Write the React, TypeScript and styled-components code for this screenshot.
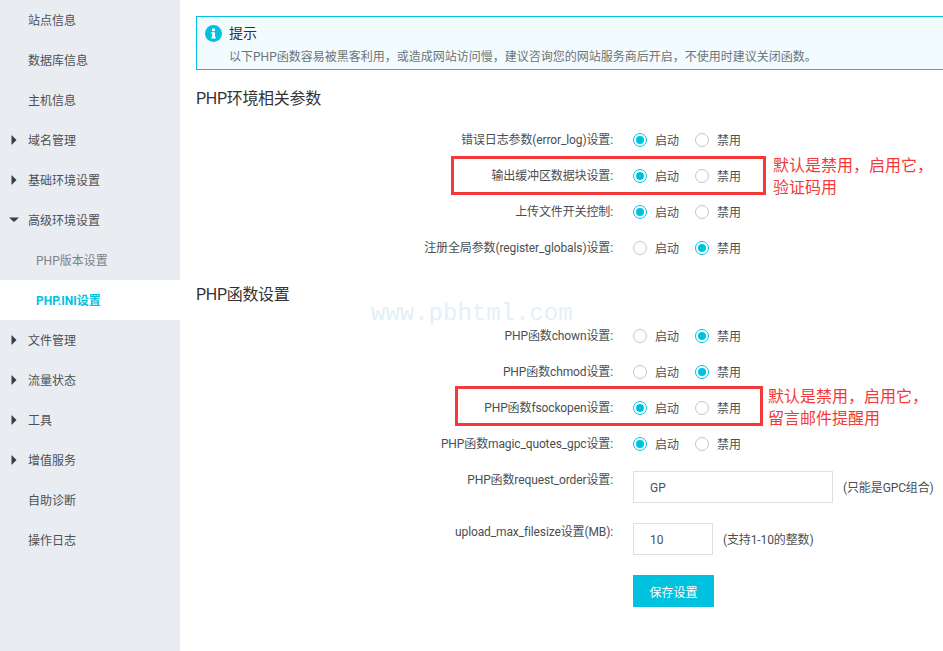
import React from "react";
import styled, { createGlobalStyle } from "styled-components";

const Global = createGlobalStyle`
  html, body { margin: 0; padding: 0; background: #fff; height: 100%; overflow: hidden; }
  body { font-family: "Roboto", "Noto Sans CJK SC", sans-serif; font-size: 12px; color: #333; }
`;
const Page = styled.div`
  position: relative; display: flex; width: 943px; height: 651px; overflow: hidden;
`;
const Sidebar = styled.nav`
  width: 180px; flex: none; background: #e9ecf1; display: flex; flex-direction: column;
`;
const NavItem = styled.div<{ $sub?: boolean; $active?: boolean }>`
  height: 40px; box-sizing: border-box; padding-bottom: 1px; flex: none; display: flex; align-items: center; position: relative;
  padding-left: ${(p) => (p.$sub ? 36 : 28)}px;
  background: ${(p) => (p.$active ? "#fff" : "transparent")};
  color: ${(p) => (p.$active ? "#00c1de" : p.$sub ? "#7d8289" : "#4d5156")};
  font-weight: ${(p) => (p.$active ? 700 : 400)};
  font-size: 12px;
`;
const Caret = styled.svg`
  position: absolute; left: 9px; top: 14px; width: 12px; height: 12px; fill: #373d41;
`;
const Main = styled.main`
  flex: 1; min-width: 0; padding: 16px 0 0 16px; display: flex; flex-direction: column;
`;
const Notice = styled.section`
  height: 54px; box-sizing: border-box; margin-right: -8px; border: 1px solid #00c1de; background: #f2fbfe;
  padding: 5px 8px 0; display: grid; grid-template-columns: 16px 1fr; grid-template-rows: 22px 22px; row-gap: 1px; column-gap: 8px; align-items: center;
`;
const NoticeIcon = styled.svg`width: 17px; height: 17px; display: block;`;
const NoticeTitle = styled.div`font-size: 14px; color: #333; line-height: 22px;`;
const NoticeText = styled.div`grid-column: 2; font-size: 12px; color: #6e7378; line-height: 20px; white-space: nowrap; padding-top: 1px;`;
const Heading = styled.h2<{ $top: number }>`
  margin: ${(p) => p.$top}px 0 0; padding-top: 2px; height: 24px; box-sizing: border-box; font-size: 16px; font-weight: 400; color: #333; line-height: 22px; letter-spacing: -0.3px;
`;
const Form = styled.div<{ $top: number }>`
  margin-top: ${(p) => p.$top}px; display: flex; flex-direction: column;
`;
const Row = styled.div<{ $h?: number; $top?: number }>`
  display: grid; grid-template-columns: 417px auto; column-gap: 20px; align-items: start;
  height: ${(p) => p.$h ?? 36}px; margin-top: ${(p) => p.$top ?? 0}px;
`;
const Label = styled.label`
  text-align: right; white-space: nowrap; color: #4a4f54; line-height: 18px; font-size: 12px;
  padding-top: 9px; letter-spacing: -0.12px;
`;
const Control = styled.div`
  display: flex; align-items: center; height: 36px;
`;
const RadioDot = styled.span<{ $on?: boolean }>`
  width: 14px; height: 14px; box-sizing: border-box; flex: none; border-radius: 50%;
  border: 1px solid ${(p) => (p.$on ? "#00c1de" : "#c4c6c7")}; background: #fff; position: relative;
  &::after {
    content: ""; display: ${(p) => (p.$on ? "block" : "none")}; position: absolute; inset: 2px;
    border-radius: 50%; background: #00c1de;
  }
`;
const RadioText = styled.span`
  margin-left: 8px; width: 40px; color: #4a4f54; font-size: 12px; line-height: 18px; padding-top: 2px;
`;
const Field = styled.div<{ $w: number }>`
  width: ${(p) => p.$w}px; height: 32px; box-sizing: border-box; border: 1px solid #dedfe0; flex: none;
  padding: 1px 0 0 16px; display: flex; align-items: center; color: #4a4f54; font-size: 12px;
`;
const Hint = styled.span`margin-left: 10px; white-space: nowrap; color: #4a4f54; font-size: 12px; margin-top: -2px; letter-spacing: -0.12px;`;
const FieldRow = styled(Row)`
  ${Label} { padding-top: 0; }
  ${Control} { height: 32px; }
`;
const Save = styled.button`
  margin: 20px 0 0 437px; width: 81px; height: 32px; border: 0; padding: 0; background: #00c1de; color: #fff;
  font: 12px "Noto Sans CJK SC", sans-serif; display: block;
`;
const Mark = styled.div<{ $x: number; $y: number; $w: number; $h: number }>`
  position: absolute; left: ${(p) => p.$x}px; top: ${(p) => p.$y}px; width: ${(p) => p.$w}px; height: ${(p) => p.$h}px;
  box-sizing: border-box; border: 3px solid #f33a3a; pointer-events: none;
`;
const Note = styled.div<{ $x: number; $y: number }>`
  position: absolute; left: ${(p) => p.$x}px; top: ${(p) => p.$y}px; color: #f33a3a; font-size: 16px;
  line-height: 22px; white-space: nowrap;
`;
const Watermark = styled.div`
  position: absolute; left: 371px; top: 299px; font: 24px/30px "Liberation Mono", monospace; color: #e2f0f9; pointer-events: none;
`;

const Right = () => (<Caret viewBox="0 0 12 12"><path d="M2.5 1 L7.5 6 L2.5 11 Z" /></Caret>);
const Down = () => (<Caret viewBox="0 0 12 12"><path d="M0 3.5 H10 L5 8 Z" /></Caret>);

const Radios = ({ on }: { on: 0 | 1 }) => (
  <Control>
    <RadioDot $on={on === 0} /><RadioText>启动</RadioText>
    <RadioDot $on={on === 1} /><RadioText>禁用</RadioText>
  </Control>
);

export default function App() {
  return (
    <Page>
      <Global />
      <Sidebar>
        <NavItem>站点信息</NavItem>
        <NavItem>数据库信息</NavItem>
        <NavItem>主机信息</NavItem>
        <NavItem><Right />域名管理</NavItem>
        <NavItem><Right />基础环境设置</NavItem>
        <NavItem><Down />高级环境设置</NavItem>
        <NavItem $sub>PHP版本设置</NavItem>
        <NavItem $sub $active>PHP.INI设置</NavItem>
        <NavItem><Right />文件管理</NavItem>
        <NavItem><Right />流量状态</NavItem>
        <NavItem><Right />工具</NavItem>
        <NavItem><Right />增值服务</NavItem>
        <NavItem>自助诊断</NavItem>
        <NavItem>操作日志</NavItem>
      </Sidebar>
      <Main>
        <Notice>
          <NoticeIcon viewBox="0 0 17 17">
            <circle cx="8.5" cy="8.5" r="8.5" fill="#00c1de" />
            <rect x="7" y="3.5" width="3" height="2.6" fill="#fff" />
            <path d="M6.2 7.2 H10 V12.2 H11 V13.6 H6.2 V12.2 H7.2 V8.6 H6.2 Z" fill="#fff" />
          </NoticeIcon>
          <NoticeTitle>提示</NoticeTitle>
          <NoticeText>以下PHP函数容易被黑客利用，或造成网站访问慢，建议咨询您的网站服务商后开启，不使用时建议关闭函数。</NoticeText>
        </Notice>
        <Heading $top={16}>PHP环境相关参数</Heading>
        <Form $top={12}>
          <Row><Label>错误日志参数(error_log)设置:</Label><Radios on={0} /></Row>
          <Row><Label>输出缓冲区数据块设置:</Label><Radios on={0} /></Row>
          <Row><Label>上传文件开关控制:</Label><Radios on={0} /></Row>
          <Row><Label>注册全局参数(register_globals)设置:</Label><Radios on={1} /></Row>
        </Form>
        <Heading $top={16}>PHP函数设置</Heading>
        <Form $top={12}>
          <Row><Label>PHP函数chown设置:</Label><Radios on={1} /></Row>
          <Row><Label>PHP函数chmod设置:</Label><Radios on={1} /></Row>
          <Row><Label>PHP函数fsockopen设置:</Label><Radios on={0} /></Row>
          <Row><Label>PHP函数magic_quotes_gpc设置:</Label><Radios on={0} /></Row>
          <FieldRow $h={52} $top={9}>
            <Label>PHP函数request_order设置:</Label>
            <Control><Field $w={200}>GP</Field><Hint>(只能是GPC组合)</Hint></Control>
          </FieldRow>
          <FieldRow $h={32}>
            <Label>upload_max_filesize设置(MB):</Label>
            <Control><Field $w={80}>10</Field><Hint>(支持1-10的整数)</Hint></Control>
          </FieldRow>
          <Save>保存设置</Save>
        </Form>
      </Main>
      <Mark $x={451} $y={156} $w={315} $h={39} />
      <Mark $x={455} $y={386} $w={308} $h={40} />
      <Note $x={773} $y={155}>默认是禁用，启用它，<br />验证码用</Note>
      <Note $x={768} $y={386}>默认是禁用，启用它，<br />留言邮件提醒用</Note>
      <Watermark>www.pbhtml.com</Watermark>
    </Page>
  );
}
